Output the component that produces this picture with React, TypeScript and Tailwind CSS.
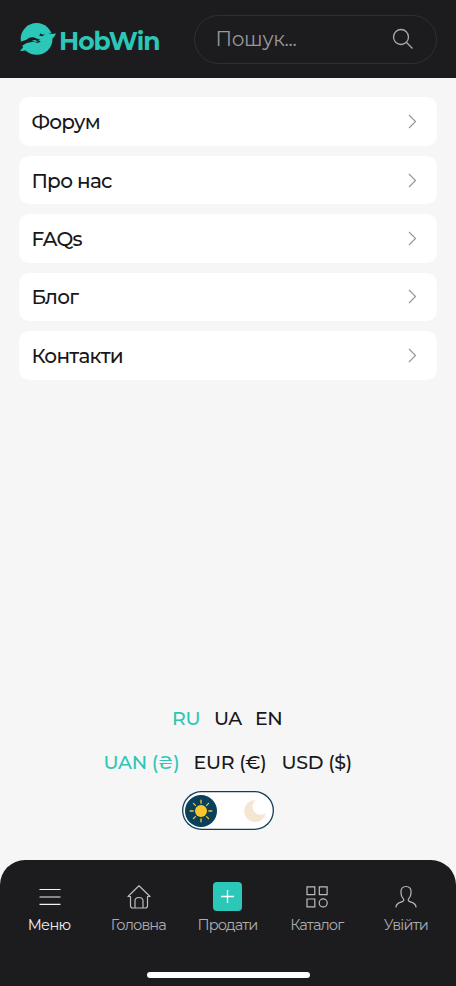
import React from "react";

const links = ["Форум", "Про нас", "FAQs", "Блог", "Контакти"];

const languages = [
  { label: "RU", style: "w-[42px] text-[#2fc5b5]" },
  { label: "UA", style: "w-[41px]" },
  { label: "EN", style: "w-[29px]" },
];

const currencies = [
  { label: "UAN (₴)", style: "w-[90px] text-[#2fc5b5]" },
  { label: "EUR (€)", style: "w-[88px]" },
  { label: "USD ($)", style: "w-[71px]" },
];

function Logo() {
  return (
    <div className="flex h-8 items-center">
      <svg width="37" height="32" viewBox="0 0 37 32" className="shrink-0">
        <circle cx="17.600" cy="15.900" r="15.900" fill="#2bc8b9" />
        <path
          fill="#2bc8b9"
          d="M.8 27.600c2.400-1.600 3.400-4.400 6.400-6.200l17-9.400c4-1.400 8-1 12.700-1.600-.8 2.700-2.300 4.300-4.300 5.700L24 27 8.500 26.500c-2.700 1.200-5.200 1.800-7.700 1.100Z"
        />
        <path
          fill="#1c1c1e"
          d="M0 19.300c3.500-1.600 5.600-1.300 7.800-2.800 2-1.700 3.700-2.500 6-2.300 1.900.2 3.200 1.400 5.300 1.700l2.500.6-2.700.6c1.300.7 2.500 1 2.600 1.600-.2.600-1.100.4-1.800.8-1 .6-2.500.2-3.500-.2-2.300-.5-4.800-.3-7.400.5-2.800 1-4.700 2-6.700 4L0 25.500Z"
        />
        <path fill="#2bc8b9" d="m12.500 18 2.800-1.100 2.700.5-1.400.7 2.500.5-2 .4-2-.5Z" />
        <path
          fill="#1c1c1e"
          d="m20.800 10.300 2.500 1.100c3.600.4 6.600-.4 10.200-1.900l1.500.9c-4 .3-7.100.4-9.700 1.400l-2.200 1.800-1-.8-2 .3 1-1.500Z"
        />
      </svg>
      <span className="ml-[3px] pt-[3px] text-[25px] leading-8 font-bold tracking-[-1px] text-[#2bc8b9]">HobWin</span>
    </div>
  );
}

function Search() {
  return (
    <div className="flex h-[49px] w-[243px] items-center justify-between rounded-full border border-[#303033] pr-[22px] pl-[21px]">
      <span className="text-[20px] leading-6 tracking-[-0.300px] text-[#98989b]">Пошук...</span>
      <svg width="22" height="22" viewBox="0 0 22 22" fill="none" stroke="#a8a8aa" strokeWidth="1.3">
        <circle cx="9" cy="9" r="7.500" />
        <path d="m14.300 14.300 6.200 6.200" />
      </svg>
    </div>
  );
}

function ThemeToggle() {
  return (
    <div className="flex h-[39px] w-[92px] items-center justify-between rounded-full bg-white px-[3px] ring-[1.300px] ring-[#123e56] ring-inset">
      <svg width="32" height="32" viewBox="0 0 32 32">
        <circle cx="16" cy="16" r="16" fill="#0a405a" />
        <circle cx="16" cy="16" r="6" fill="#f9c62e" />
        <path
          d="M16 5.200v3M16 23.800v3M5.200 16h3M23.800 16h3M8.400 8.400l2 2M21.600 21.600l2 2M8.400 23.600l2-2M21.600 10.400l2-2"
          stroke="#f9c62e"
          strokeWidth="1.300"
          strokeLinecap="round"
        />
      </svg>
      <svg width="24" height="24" viewBox="0 0 24 24" className="mr-1">
        <path fill="#f4e6d2" d="M12.500 1A11 11 0 1 0 23 14a8.200 8.200 0 0 1-10.500-13Z" />
      </svg>
    </div>
  );
}

const iconProps = {
  width: 24,
  height: 26,
  viewBox: "0 0 24 26",
  fill: "none",
  stroke: "#bcbcbe",
  strokeWidth: 1.2,
};

const tabs = [
  {
    label: "Меню",
    style: "text-[#eeeeef] tracking-[-0.700px]",
    icon: (
      <svg {...iconProps} stroke="#f2f2f3">
        <path d="M1.500 5.500h21M1.500 13h21M1.500 20.300h21" />
      </svg>
    ),
  },
  {
    label: "Головна",
    style: "text-[#adadb0] tracking-[-0.900px]",
    icon: (
      <svg {...iconProps} strokeLinejoin="round" strokeLinecap="round">
        <path d="M3.500 12.500v9.300c0 1.500.7 2.200 2.200 2.200h12.600c1.500 0 2.200-.7 2.200-2.200v-9.300M1 12.500h2.500M20.500 12.500H23M1 12.500 12 1.800l11 10.700M8 24v-7.200c0-2.200 1.400-3.300 4-3.300s4 1.100 4 3.300V24" />
      </svg>
    ),
  },
  {
    label: "Продати",
    style: "text-[#adadb0] tracking-[-0.900px]",
    icon: (
      <div className="flex size-[29px] items-center justify-center rounded-[4px] bg-[#2bc8b9]">
        <svg width="13" height="13" viewBox="0 0 13 13" stroke="#fff" strokeWidth="1.300">
          <path d="M6.500 0v13M0 6.500h13" />
        </svg>
      </div>
    ),
  },
  {
    label: "Каталог",
    style: "text-[#adadb0] tracking-[-0.900px]",
    icon: (
      <svg {...iconProps}>
        <path d="M2 2.800h7.800v7.800H2ZM14.300 2.800h7.800v7.800h-7.800ZM2 15h7.800v7.800H2Z" />
        <circle cx="18.200" cy="18.900" r="4" />
      </svg>
    ),
  },
  {
    label: "Увійти",
    style: "text-[#adadb0] tracking-[-0.800px]",
    icon: (
      <svg {...iconProps} strokeLinecap="round" strokeLinejoin="round">
        <path d="M2 23c0-3.700 3.200-4.200 6.200-5.400 1.800-.7 2-1.700 1-2.900C7.600 13 6.900 10.500 6.900 8.100c0-3.800 1.900-5.600 5.100-5.600s5.100 1.800 5.100 5.600c0 2.400-.7 4.900-2.300 6.600-1 1.200-.8 2.200 1 2.900 3 1.200 6.200 1.700 6.200 5.400" />
      </svg>
    ),
  },
];

export default function App() {
  return (
    <div className="flex h-[986px] w-[456px] flex-col overflow-hidden bg-[#f6f6f6] font-['Montserrat','Inter',sans-serif] whitespace-nowrap text-[#18181a]">
      <header className="flex h-[78px] shrink-0 items-center justify-between bg-[#1c1c1e] pr-[19.500px] pl-[19px]">
        <Logo />
        <Search />
      </header>
      <main className="flex flex-1 flex-col">
        <nav className="mt-[19.400px] mr-[19.500px] ml-[19.400px] flex flex-col gap-[9.800px]">
          {links.map((label) => (
            <a key={label} className="flex h-[48.600px] items-center justify-between rounded-[10px] bg-white pr-[20px] pl-3">
              <span className="pt-px text-[20px] leading-6 font-medium tracking-[-0.700px]">{label}</span>
              <svg width="9" height="15" viewBox="0 0 9 15" fill="none" stroke="#98989b" strokeWidth="1.200">
                <path d="m1 1 6.500 6.500L1 14" />
              </svg>
            </a>
          ))}
        </nav>
        <div className="mt-auto mb-[30px] flex flex-col items-center">
          <div className="flex text-[19px] leading-6 font-medium tracking-[-0.400px]">
            {languages.map(({ label, style }) => (
              <span key={label} className={style}>{label}</span>
            ))}
          </div>
          <div className="mt-5 flex text-[19px] leading-6 font-medium tracking-[-0.250px]">
            {currencies.map(({ label, style }) => (
              <span key={label} className={style}>{label}</span>
            ))}
          </div>
          <div className="mt-4">
            <ThemeToggle />
          </div>
        </div>
      </main>
      <footer className="flex h-[126px] shrink-0 flex-col items-center justify-between rounded-t-[25px] bg-[#1c1c1e] pt-[22px] pb-2">
        <div className="grid w-[446px] grid-cols-5">
          {tabs.map(({ label, style, icon }) => (
            <div key={label} className="flex flex-col items-center">
              <div className="flex h-[29px] items-center">{icon}</div>
              <span className={`mt-1 mr-px text-[14.600px] leading-5 ${style}`}>{label}</span>
            </div>
          ))}
        </div>
        <div className="h-[6px] w-[163px] rounded-full bg-white" />
      </footer>
    </div>
  );
}
